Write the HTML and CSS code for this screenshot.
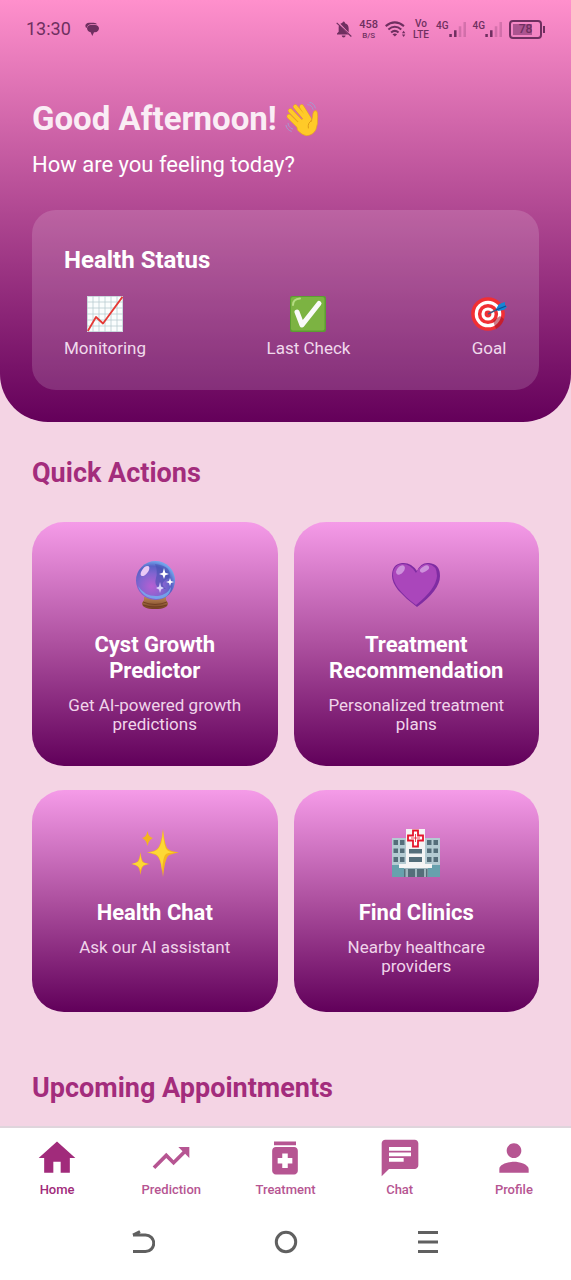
FILE: index.html
```html
<!DOCTYPE html>
<html lang="en">
<head>
<meta charset="utf-8">
<meta name="viewport" content="width=device-width, initial-scale=1">
<title>Home</title>
<link rel="stylesheet" href="styles.css">
</head>
<body>
<div class="app">
  <header class="hero">
    <div class="status-bar">
      <div class="status-left">
        <span class="clock">13:30</span>
        <svg class="ic-message" viewBox="0 0 42 42" aria-hidden="true"><path d="M12 2H26Q35 2 36 7H18Q8 8 5 18Q1 16 1 11Q2 3 12 2Z"/><path d="M17 9H30Q41 10 42 19Q41 30 30 31H27L22 42L17 31Q7 29 6 19Q7 10 17 9Z"/></svg>
      </div>
      <div class="status-right">
        <svg class="ic-bell" viewBox="0 0 48 50" aria-hidden="true"><path d="M23 1Q27 1 27 6Q38 9 38 22V34L13 8Q16 6 19 5.500Q19 1 23 1Z"/><path d="M9 12L37 40H3V37L8 32V20Q8 15 9 12Z"/><path d="M17 43H29Q28 49 23 49Q18 49 17 43Z"/><path d="M2 5L46 46" fill="none" stroke="currentColor" stroke-width="3.500"/></svg>
        <span class="stack"><span class="stack-top">458</span><span class="stack-small">B/S</span></span>
        <svg class="ic-wifi" viewBox="0 0 62 50" aria-hidden="true"><g fill="none" stroke="currentColor" stroke-width="6"><path d="M2 15Q29-7 56 15"/><path d="M10 25Q29 9 48 25"/><path d="M18 34Q29 24 40 34"/></g><path d="M22 39Q29 34 36 39L29 46Z"/><path d="M55 29L60 36H50ZM55 47L60 40H50Z"/></svg>
        <span class="stack stack-lte"><span>Vo</span><span>LTE</span></span>
        <span class="signal"><span>4G</span><svg viewBox="0 0 54 48" aria-hidden="true"><path d="M1 38H9V48H1ZM16 26H24V48H16Z"/><path opacity=".25" d="M31 14H39V48H31ZM46 0H54V48H46Z"/></svg></span>
        <span class="signal"><span>4G</span><svg viewBox="0 0 54 48" aria-hidden="true"><path d="M1 38H9V48H1ZM16 26H24V48H16Z"/><path opacity=".25" d="M31 14H39V48H31ZM46 0H54V48H46Z"/></svg></span>
        <span class="battery"><span class="battery-body">78</span><span class="battery-tip"></span></span>
      </div>
    </div>

    <div class="greeting">
      <h1>Good Afternoon!
        <svg class="wave" viewBox="0 0 96 102" aria-hidden="true">
          <g fill="none" stroke="#e9a51d" stroke-linecap="round" stroke-width="14"><path d="M9 43L46 80M13 26L52 67M28 14L62 54M47 14L70 51"/></g>
          <path d="M32 62L64 42L76 58Q80 48 81 34Q83 24 91 26Q95 29 95 44Q96 66 90 82Q82 100 62 101Q48 100 34 84Z" fill="#ffca28" stroke="#e9a51d" stroke-width="2"/>
          <g fill="none" stroke="#ffca28" stroke-linecap="round" stroke-width="11"><path d="M9 43L46 80M13 26L52 67M28 14L62 54M47 14L70 51"/></g>
          <path d="M34 70L64 46L76 60L88 80Q80 97 62 98Q52 97 38 82Z" fill="#ffca28"/>
          <path d="M77 56Q64 62 67 78" fill="none" stroke="#e09a16" stroke-width="3" stroke-linecap="round"/>
          <g fill="none" stroke="#a996ce" stroke-width="3" stroke-linecap="round"><path d="M65 8Q78 8 81 22M71 1Q85 3 88 18M6 64Q7 77 20 81M0 70Q2 84 16 88"/></g>
        </svg>
      </h1>
      <p>How are you feeling today?</p>
    </div>

    <section class="health">
      <h2>Health Status</h2>
      <ul class="stats">
        <li>
          <svg viewBox="0 0 36 36" aria-hidden="true"><path fill="#fafdfd" d="M0 0H36V36H0Z"/><path fill="none" stroke="#b9cbd0" stroke-width=".8" d="M6 0V36M12 0V36M18 0V36M24 0V36M30 0V36M0 6H36M0 12H36M0 18H36M0 24H36M0 30H36M.4 .4H35.600V35.600H.4Z"/><path fill="none" stroke="#e53935" stroke-width="1.800" stroke-linejoin="round" d="M.8 35L9 21L16 27.500L35.500 .8"/></svg>
          <span>Monitoring</span>
        </li>
        <li>
          <svg viewBox="0 0 36 36" aria-hidden="true"><rect width="36" height="36" rx="2" fill="#5c9d32"/><rect x="1" y="1" width="33.500" height="33.500" rx="2" fill="#7cb342"/><path d="M3 9Q3 3 10 2.500" fill="none" stroke="#b5dc82" stroke-width="2" stroke-linecap="round"/><path d="M7 16L12 29L29 7.500" fill="none" stroke="#fafafa" stroke-width="5" stroke-linecap="round" stroke-linejoin="round"/></svg>
          <span>Last Check</span>
        </li>
        <li>
          <svg viewBox="0 0 36 36" aria-hidden="true"><circle cx="17" cy="18" r="16.800" fill="#f12f34"/><circle cx="17" cy="18" r="11.700" fill="none" stroke="#fff" stroke-width="3.200"/><circle cx="17" cy="18" r="5" fill="none" stroke="#fff" stroke-width="3.200"/><path d="M22 25L25 33Q31 30 33 23L29 20Z" fill="#a31328" opacity=".55"/><path d="M17 18L29 12" stroke="#455a83" stroke-width="1.500"/><path d="M25 13L28 8L34 6L34 9L36 11L33 14L27 15Z" fill="#1685d4"/><path d="M25 14L35 10" stroke="#0b4d94" stroke-width="1.300"/></svg>
          <span>Goal</span>
        </li>
      </ul>
    </section>
  </header>

  <main class="content">
    <h2 class="section-title">Quick Actions</h2>
    <div class="actions">
      <button class="card" type="button">
        <svg viewBox="0 0 48 48" aria-hidden="true">
          <defs>
            <radialGradient id="orb" cx=".4" cy=".65" r=".65"><stop offset="0" stop-color="#b65fd2"/><stop offset=".5" stop-color="#8264d0"/><stop offset=".8" stop-color="#5961c5"/><stop offset="1" stop-color="#71a5ec"/></radialGradient>
            <linearGradient id="stand" x2="0" y2="1"><stop stop-color="#bd8657"/><stop offset="1" stop-color="#754021"/></linearGradient>
          </defs>
          <path d="M13 36H35V39L37 42Q37 48 24 48Q11 48 11 42L13 39Z" fill="url(#stand)"/><path d="M12 41Q24 46 36 41M12 44Q24 48 36 44" stroke="#69381e" stroke-width=".8" fill="none"/>
          <circle cx="24.500" cy="19.500" r="19.500" fill="url(#orb)"/>
          <path d="M24 3Q42 5 38 17Q27 22 35 28Q22 28 25 17Q27 10 24 3Z" fill="#434fae" opacity=".55"/><path d="M7 25Q14 36 27 35Q36 34 40 26Q39 38 25 38Q11 37 7 25Z" fill="#73baf6" opacity=".7"/>
          <ellipse cx="14" cy="10" rx="3" ry="6" transform="rotate(38 14 10)" fill="#e9c9f5"/>
          <path fill="#fff" d="M33 7L34.300 11.800L38 13L34.300 14.300L33 18L31.700 14.300L28 13L31.700 11.800ZM39 17L40 20L43 21L40 22L39 25L38 22L35 21L38 20Z"/><path fill="#ddd4fb" d="M29 21L30 25.500L33 27L30 28.500L29 32L28 28.500L25 27L28 25.500Z"/>
        </svg>
        <strong>Cyst Growth Predictor</strong><span>Get AI-powered growth predictions</span>
      </button>
      <button class="card" type="button">
        <svg viewBox="0 0 48 48" aria-hidden="true"><path fill="#7f2ca2" d="M25 10Q29 1 37 2Q48 3 48 15Q48 29 25 46Q14 38 6 29Q0 21 0 15Q0 3 10 2Q19 1 25 10Z"/><path fill="#aa46bb" d="M24 12Q28 3 36 3Q45 4 45 15Q44 28 24 44Q13 36 6 27Q1 20 1 14Q1 4 10 3Q19 3 24 12Z"/><g fill="#ce91dc"><ellipse cx="8.500" cy="9" rx="3.300" ry="5.500" transform="rotate(42 8.500 9)"/><ellipse cx="32.500" cy="8" rx="2.700" ry="5" transform="rotate(60 32.500 8)"/></g></svg>
        <strong>Treatment Recommendation</strong><span>Personalized treatment plans</span>
      </button>
      <button class="card" type="button">
        <svg viewBox="0 0 48 48" aria-hidden="true"><path fill="#f4b51e" d="M32 0Q34 18 37 20Q39 22 48 23.500Q39 25 37 27Q34 30 32 48Q30 30 26 27Q24 25 16 23.500Q24 22 26 20Q30 17 32 0ZM9.500 23Q10.500 31 12 32.500Q13 34 19 35Q13 36 12 37.500Q10.500 39 9.500 46Q8.500 39 6.500 37.500Q5 36 0 35Q5 34 6.500 32.500Q8.500 30 9.500 23ZM16.500 2Q17.500 8 22 9Q17.500 11 16.500 17Q15.500 11 11 9Q15.500 8 16.500 2Z"/><path fill="#fdd835" d="M32 2Q33 18 36 21Q38 23 46 23.500Q37 23 35 25Q32 27 31 42Q30 29 26 26Q23 24 17 23.500Q24 23 27 20Q31 16 32 2ZM9.500 25Q10 32 12 33.500L17 35Q11 35 9.500 41Q8 36 1 35L7 33Q9 31 9.500 25Z"/></svg>
        <strong>Health Chat</strong><span>Ask our AI assistant</span>
      </button>
      <button class="card" type="button">
        <svg viewBox="0 0 48 48" aria-hidden="true"><path fill="#b4cbd2" d="M0 9H48V48H0Z"/><path fill="#67a1ad" d="M0 36H12V48H0ZM36 36H48V48H36Z"/><path fill="#f4f4f4" d="M14 0H33V36H14Z"/><path fill="#9eb5bd" d="M12 39H36V48H12Z"/><path fill="#f5f5f5" d="M7 35H40V39H7Z"/><path fill="#546e7a" d="M1.500 11H6V16H1.500ZM8 11H12.500V16H8ZM1.500 19.500H6V24H1.500ZM8 19.500H12.500V24H8ZM1.500 28H6V33H1.500ZM8 28H12.500V33H8ZM35 11H39.500V16H35ZM41.500 11H46V16H41.500ZM35 19.500H39.500V24H35ZM41.500 19.500H46V24H41.500ZM35 28H39.500V33H35ZM41.500 28H46V33H41.500ZM17 20H30V24.500H17ZM17 28H30V33H17ZM12 40H13.500V48H12ZM16 40H23V48H16ZM25 40H32V48H25ZM34 40H35.500V48H34Z"/><path d="M21 1.500H26V6.500H31V11.500H26V17.500H21V11.500H16V6.500H21Z" fill="#fff" stroke="#e5152c" stroke-width="1.800"/><path d="M23.500 5V13M19 9H28" stroke="#e5152c" stroke-width=".8"/></svg>
        <strong>Find Clinics</strong><span>Nearby healthcare providers</span>
      </button>
    </div>
    <h2 class="section-title upcoming">Upcoming Appointments</h2>
  </main>

  <nav class="tabs" aria-label="Main">
    <a class="tab active" href="#home" aria-current="page"><svg viewBox="0 0 24 24" aria-hidden="true"><path d="M10 20v-6h4v6h5v-8h3L12 3 2 12h3v8z"/></svg><span>Home</span></a>
    <a class="tab" href="#prediction"><svg viewBox="0 0 24 24" aria-hidden="true"><path d="M16 6l2.290 2.290-4.880 4.880-4-4L2 16.590 3.410 18l6-6 4 4 6.300-6.290L22 12V6z"/></svg><span>Prediction</span></a>
    <a class="tab" href="#treatment"><svg viewBox="0 0 24 24" aria-hidden="true"><path d="M6 3h12v2H6zm11 3H7c-1.100 0-2 .9-2 2v11c0 1.100.9 2 2 2h10c1.100 0 2-.9 2-2V8c0-1.100-.9-2-2-2zm-1 9h-2.500v2.500h-3V15H8v-3h2.500V9.500h3V12H16v3z"/></svg><span>Treatment</span></a>
    <a class="tab" href="#chat"><svg viewBox="0 0 24 24" aria-hidden="true"><path d="M20 2H4c-1.100 0-1.990.9-1.990 2L2 22l4-4h14c1.100 0 2-.9 2-2V4c0-1.100-.9-2-2-2zM6 9h12v2H6V9zm8 5H6v-2h8v2zm4-6H6V6h12v2z"/></svg><span>Chat</span></a>
    <a class="tab" href="#profile"><svg viewBox="0 0 24 24" aria-hidden="true"><path d="M12 12c2.210 0 4-1.790 4-4s-1.790-4-4-4-4 1.790-4 4 1.790 4 4 4zm0 2c-2.670 0-8 1.340-8 4v2h16v-2c0-2.660-5.330-4-8-4z"/></svg><span>Profile</span></a>
  </nav>
  <div class="system-nav">
    <button type="button" aria-label="Back"><svg viewBox="0 0 24 24"><path d="M2 5H14.500A8.200 8.200 0 0 1 14.500 21.500H2M2 5L9 1.500"/></svg></button>
    <button type="button" aria-label="Home screen"><svg viewBox="0 0 24 24"><circle cx="12" cy="12" r="9.700"/></svg></button>
    <button type="button" aria-label="Recent apps"><svg viewBox="0 0 24 24"><path d="M2 2.500H22M2 12H22M2 21.500H22"/></svg></button>
  </div>
</div>
</body>
</html>
```

FILE: styles.css
```css
* { box-sizing: border-box; }

body {
  margin: 0;
  background: #f4d4e4;
  font-family: Roboto, "Liberation Sans", sans-serif;
  color: #fff;
}

h1, h2, p, ul { margin: 0; padding: 0; }
ul { list-style: none; }
svg { display: block; flex: none; fill: currentColor; }
button { border: 0; padding: 0; background: none; color: inherit; font: inherit; cursor: pointer; }
a { color: inherit; text-decoration: none; }

.app { display: flex; flex-direction: column; min-height: 100vh; }

.hero {
  padding: 0 32px 32px;
  border-radius: 0 0 48px 48px;
  background: linear-gradient(#ff90cc, #b04892 50%, #64005a);
}

.status-bar {
  display: flex;
  align-items: center;
  justify-content: space-between;
  height: 58px;
  margin: 0 -6px;
  color: #6f2f60;
}
.status-left, .status-right { display: flex; align-items: center; }
.status-left { gap: 14px; }
.status-right { gap: 7px; }
.clock { font-size: 18px; line-height: 24px; }
.ic-message { width: 14px; height: 14px; }
.ic-bell { width: 16px; height: 17px; }
.ic-wifi { width: 21px; height: 17px; }
.stack {
  display: flex;
  flex-direction: column;
  align-items: center;
  font-size: 11px;
  line-height: 12px;
  font-weight: 500;
}
.stack-small { font-size: 8px; line-height: 9px; }
.stack-lte { font-size: 10px; line-height: 11px; }
.signal { display: flex; align-items: flex-end; }
.signal span { align-self: flex-start; font-size: 10px; line-height: 10px; font-weight: 500; }
.signal svg { width: 17px; height: 17px; }
.battery { display: flex; align-items: center; gap: 1px; }
.battery-body {
  width: 33px;
  padding: 2px;
  border: 2px solid #6f2f60;
  border-radius: 4px;
  background: linear-gradient(90deg, #ac5490 78%, transparent 78%) content-box;
  font-size: 12px;
  line-height: 11px;
  font-weight: 500;
  text-align: center;
}
.battery-tip { width: 2px; height: 7px; background: #6f2f60; }

.greeting { padding: 41px 0 32px; }
.greeting h1 {
  display: flex;
  align-items: center;
  gap: 8px;
  font-size: 33px;
  line-height: 40px;
  color: #faedf5;
}
.wave { width: 34px; height: 34px; }
.greeting p { margin-top: 13px; font-size: 22px; line-height: 26px; }

.health {
  padding: 32px;
  border-radius: 24px;
  background: rgba(255, 255, 255, 0.15);
}
.health h2 { font-size: 24px; line-height: 36px; }
.stats { display: flex; justify-content: space-between; margin-top: 18px; }
.stats li { display: flex; flex-direction: column; align-items: center; gap: 6px; }
.stats svg { width: 36px; height: 36px; }
.stats span { font-size: 17px; line-height: 20px; color: #f0d9ec; }

.content { flex: 1; padding: 35px 32px 22px; }
.section-title { font-size: 27px; line-height: 32px; color: #a32c7c; }
.upcoming { margin-top: 60px; }
.actions {
  display: grid;
  grid-template-columns: 1fr 1fr;
  gap: 24px 16px;
  margin-top: 33px;
}
.card {
  display: flex;
  flex-direction: column;
  align-items: center;
  min-height: 222px;
  padding: 39px 32px 32px;
  border-radius: 32px;
  background: linear-gradient(#f59be8, #ad509f 50%, #61005a);
  text-align: center;
}
.card svg { width: 48px; height: 48px; }
.card strong { margin-top: 23px; font-size: 22px; line-height: 26px; }
.card span { margin-top: 12px; font-size: 17px; line-height: 19px; color: #f0d4ea; }

.tabs {
  display: grid;
  grid-template-columns: repeat(5, 1fr);
  padding: 8px 0 12px;
  border-top: 2px solid #dfd5dc;
  background: #fff;
  color: #b65592;
}
.tab { display: flex; flex-direction: column; align-items: center; }
.tab svg { width: 44px; height: 44px; }
.tab span { font-size: 13px; line-height: 20px; font-weight: 500; }
.tab.active { color: #a12b7b; }

.system-nav {
  display: grid;
  grid-template-columns: repeat(3, 1fr);
  padding: 18px 12.5% 26px;
  background: #fff;
  color: #606060;
}
.system-nav button { display: flex; justify-content: center; }
.system-nav svg { width: 24px; height: 24px; fill: none; stroke: currentColor; stroke-width: 3; }
```
